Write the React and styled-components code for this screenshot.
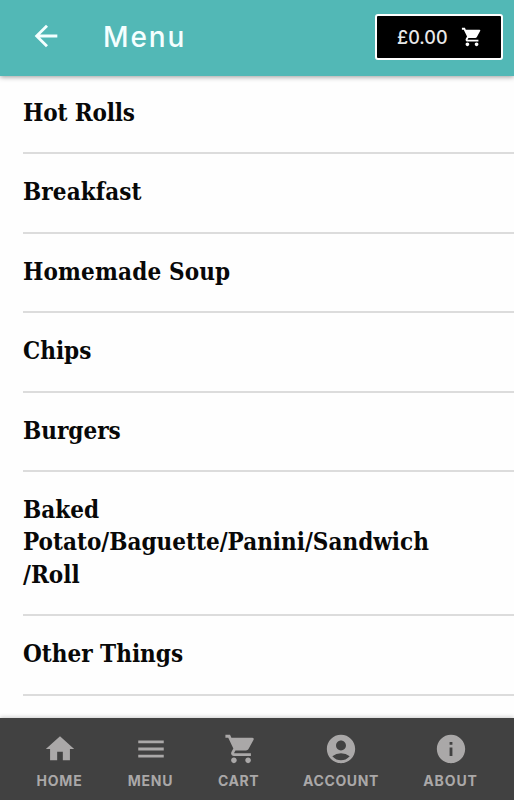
import React from 'react';
import styled, { createGlobalStyle } from 'styled-components';
import {
  MdArrowBack,
  MdShoppingCart,
  MdHome,
  MdMenu,
  MdAccountCircle,
  MdInfo,
} from 'react-icons/md';

const GlobalStyle = createGlobalStyle`
  * {
    box-sizing: border-box;
  }
  body {
    margin: 0;
    background: #fff;
    overflow: hidden;
  }
`;

const Screen = styled.div`
  display: flex;
  flex-direction: column;
  height: 100vh;
  overflow: hidden;
  background: #fefefe;
  font-family: "Inter", "Liberation Sans", sans-serif;
`;

const Header = styled.header`
  display: flex;
  align-items: center;
  flex: 0 0 76px;
  padding: 0 11px 2px 29px;
  background: #52b8b6;
  color: #f4ffff;
  box-shadow: 0 1px 5px rgba(0, 0, 0, 0.4);
  z-index: 1;
`;

const BackButton = styled.button`
  display: flex;
  padding: 0;
  margin-top: -3px;
  border: 0;
  background: none;
  color: inherit;
  font-size: 34px;
`;

const Title = styled.h1`
  flex: 1;
  margin: 0 0 0 40px;
  font-size: 28px;
  font-weight: 500;
  line-height: 34px;
  letter-spacing: 1.9px;
`;

const CartButton = styled.button`
  display: flex;
  align-items: center;
  justify-content: space-between;
  width: 128px;
  height: 46px;
  padding: 0 18px 0 20px;
  border: 2px solid #fff;
  border-radius: 3px;
  background: #000;
  color: #fff;
  font-family: inherit;
  font-size: 18px;
  font-weight: 500;
`;

const CartTotal = styled.span`
  color: #e8e8e8;
`;

const List = styled.ul`
  flex: 1;
  min-height: 0;
  margin: -1px 0 0;
  padding: 0 0 0 23px;
  overflow: hidden;
  list-style: none;
`;

const Category = styled.li`
  padding: 22px 60px 23px 0;
  border-bottom: 2px solid #dcdcdc;
  color: #080808;
  font-family: "DejaVu Serif Condensed", "DejaVu Serif", serif;
  font-size: 24px;
  font-weight: 700;
  line-height: 32.4px;
  letter-spacing: ${({ $spacing }) => $spacing || 0}px;
  white-space: pre-line;
`;

const TabBar = styled.nav`
  display: flex;
  justify-content: center;
  gap: 45px;
  flex: 0 0 82px;
  padding-top: 14px;
  background: #414141;
  box-shadow: 0 -1px 4px rgba(0, 0, 0, 0.2);
  color: #aaa8a8;
  z-index: 1;
`;

const Tab = styled.a`
  display: flex;
  flex-direction: column;
  align-items: center;
  width: ${({ $width }) => $width}px;
  font-size: 34px;

  svg {
    margin-left: ${({ $nudge }) => $nudge || 0}px;
  }
`;

const TabLabel = styled.span`
  margin-top: 6px;
  font-size: 14px;
  font-weight: 700;
  line-height: 18px;
  white-space: nowrap;
  letter-spacing: ${({ $spacing }) => $spacing || 0}px;
`;

const categories = [
  { name: 'Hot Rolls', spacing: -0.15 },
  { name: 'Breakfast', spacing: 0.1 },
  { name: 'Homemade Soup', spacing: 0.15 },
  { name: 'Chips' },
  { name: 'Burgers' },
  { name: 'Baked\nPotato/Baguette/Panini/Sandwich\n/Roll' },
  { name: 'Other Things' },
  { name: '' },
];

const tabs = [
  { label: 'HOME', icon: MdHome, width: 46, spacing: 0.8 },
  { label: 'MENU', icon: MdMenu, width: 46, spacing: 0.8 },
  { label: 'CART', icon: MdShoppingCart, width: 40, spacing: 0.5, nudge: 4 },
  { label: 'ACCOUNT', icon: MdAccountCircle, width: 75, spacing: 0.6 },
  { label: 'ABOUT', icon: MdInfo, width: 54, spacing: 0.9 },
];

const App = () => {
  return (
    <Screen>
      <GlobalStyle />
      <Header>
        <BackButton aria-label="Back">
          <MdArrowBack />
        </BackButton>
        <Title>Menu</Title>
        <CartButton>
          <CartTotal>£0.00</CartTotal>
          <MdShoppingCart size={22} />
        </CartButton>
      </Header>
      <List>
        {categories.map((item, index) => (
          <Category key={index} $spacing={item.spacing}>{item.name}</Category>
        ))}
      </List>
      <TabBar>
        {tabs.map(({ label, icon: Icon, width, spacing, nudge }) => (
          <Tab key={label} $width={width} $nudge={nudge}>
            <Icon />
            <TabLabel $spacing={spacing}>{label}</TabLabel>
          </Tab>
        ))}
      </TabBar>
    </Screen>
  );
};

export default App;
